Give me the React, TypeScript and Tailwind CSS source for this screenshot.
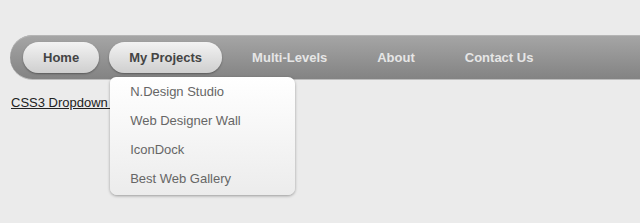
const items = ["Home", "My Projects", "Multi-Levels", "About", "Contact Us"];

const projects = ["N.Design Studio", "Web Designer Wall", "IconDock", "Best Web Gallery"];

export default function App() {
  return (
    <div className="relative h-[223px] w-[640px] overflow-hidden bg-[#ebebeb] pl-[10px] pt-[35px] font-['Liberation_Sans',Arial,sans-serif]">
      <nav className="h-[45px] w-[700px] rounded-l-[23px] border-b border-[#bdbdbd] bg-gradient-to-b from-[#a6a6a6] to-[#838383] pl-[13px] pt-[7px] shadow-[inset_0_1px_0_#b5b5b5]">
        <ul className="flex gap-[10px]">
          {items.map((label, i) => (
            <li key={label} className="relative">
              <span
                className={
                  i < 2
                    ? "flex h-[31px] items-center rounded-full bg-gradient-to-b from-[#f3f3f3] to-[#cfcfcf] px-5 text-[13px] font-bold text-[#444] shadow-[0_1px_2px_rgba(0,0,0,0.35)]"
                    : "flex h-[31px] items-center px-5 text-[13px] font-bold text-[#e6e6e6]"
                }
              >
                {label}
              </span>
              {i === 1 && (
                <ul className="absolute left-[1px] top-[35px] z-10 w-[185px] rounded-[7px] rounded-tl-[6px] bg-gradient-to-b from-white to-[#ececec] pb-[2px] shadow-[0_1px_3px_rgba(0,0,0,0.35)]">
                  {projects.map((p) => (
                    <li key={p} className="flex h-[29px] items-center pl-5 text-[13px] text-[#666]">
                      {p}
                    </li>
                  ))}
                </ul>
              )}
            </li>
          ))}
        </ul>
      </nav>
      <a href="#" className="mt-[15px] ml-px block text-[13px] leading-[16px] text-[#222] underline">
        CSS3 Dropdown Menu
      </a>
    </div>
  );
}
